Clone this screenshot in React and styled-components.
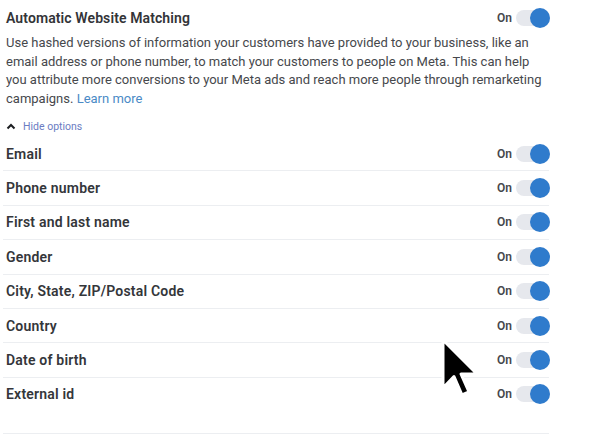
import React from 'react';
import styled, { createGlobalStyle } from 'styled-components';

const Global = createGlobalStyle`
  html, body {
    margin: 0;
    padding: 0;
    background: #ffffff;
  }
  body {
    font-family: Roboto, "Noto Sans", "Liberation Sans", sans-serif;
    color: #1c1e21;
  }
`;

const Page = styled.div`
  position: relative;
  width: 602px;
  height: 436px;
  overflow: hidden;
  background: #fff;
`;

const Panel = styled.div`
  width: 546px;
  margin-left: 3px;
  padding-top: 8px;
`;

const Header = styled.div`
  display: flex;
  align-items: center;
  justify-content: space-between;
  height: 20px;
  padding-left: 3px;
`;

const Title = styled.h3`
  margin: 0;
  font-size: 14px;
  font-weight: 600;
  color: #333438;
  letter-spacing: 0.1px;
`;

const Description = styled.p`
  margin: 6px 0 0;
  padding-left: 3px;
  width: 540px;
  font-size: 13px;
  line-height: 18.5px;
  color: #46484c;
`;

const LearnMore = styled.a`
  color: #4a8ac6;
  text-decoration: none;
`;

const HideOptions = styled.button`
  display: flex;
  align-items: center;
  gap: 7px;
  margin: 12px 0 0 3px;
  padding: 0;
  border: 0;
  background: none;
  font-family: inherit;
  font-size: 10.5px;
  color: #6b7cc2;
  cursor: pointer;
`;

const List = styled.ul`
  list-style: none;
  margin: 4px 0 0;
  padding: 0;
`;

const Row = styled.li`
  display: flex;
  justify-content: space-between;
  height: ${p => (p.last ? '56px' : '34.4px')};
  align-items: ${p => (p.last ? 'flex-start' : 'center')};
  padding-top: ${p => (p.last ? '8px' : '0')};
  box-sizing: border-box;
  border-bottom: 1px solid #eceef1;
  padding-left: 3px;
`;

const Label = styled.span`
  font-size: 14px;
  font-weight: 600;
  color: #34363a;
  letter-spacing: 0.2px;
`;

const ToggleWrap = styled.div`
  display: flex;
  align-items: center;
  gap: 4px;
  margin-right: -1px;
`;

const State = styled.span`
  font-size: 12px;
  font-weight: 600;
  color: #45474b;
`;

const Track = styled.span`
  position: relative;
  display: inline-block;
  width: 34px;
  height: 16px;
  border-radius: 8px;
  background: #e6e8ed;
`;

const Knob = styled.span`
  position: absolute;
  top: -2px;
  right: 0;
  width: 20px;
  height: 20px;
  border-radius: 50%;
  background: #2f7bcc;
`;

const Cursor = styled.svg`
  position: absolute;
  left: 438px;
  top: 335px;
`;

const Toggle = () => (
  <ToggleWrap>
    <State>On</State>
    <Track>
      <Knob />
    </Track>
  </ToggleWrap>
);

const fields = [
  'Email',
  'Phone number',
  'First and last name',
  'Gender',
  'City, State, ZIP/Postal Code',
  'Country',
  'Date of birth',
  'External id',
];

export default function App() {
  return (
    <Page>
      <Global />
      <Panel>
        <Header>
          <Title>Automatic Website Matching</Title>
          <Toggle />
        </Header>
        <Description>
          Use hashed versions of information your customers have provided to your business, like an
          email address or phone number, to match your customers to people on Meta. This can help
          you attribute more conversions to your Meta ads and reach more people through remarketing
          campaigns. <LearnMore href="#">Learn more</LearnMore>
        </Description>
        <HideOptions>
          <svg width="10" height="7" viewBox="0 0 10 7">
            <path d="M1.5 5.5 L5 2 L8.5 5.5" fill="none" stroke="#1c1e21" strokeWidth="2" />
          </svg>
          Hide options
        </HideOptions>
        <List>
          {fields.map((f, i) => (
            <Row key={f} last={i === fields.length - 1}>
              <Label>{f}</Label>
              <Toggle />
            </Row>
          ))}
        </List>
      </Panel>
      <Cursor width="42" height="64" viewBox="-2 -2 42 64">
        <path
          d="M3 3 L3 51 L14 39.5 L22 58 L29 55 L21 37 L37 37 Z"
          fill="#000"
          stroke="#fff"
          strokeWidth="3"
          strokeLinejoin="round"
        />
      </Cursor>
    </Page>
  );
}
